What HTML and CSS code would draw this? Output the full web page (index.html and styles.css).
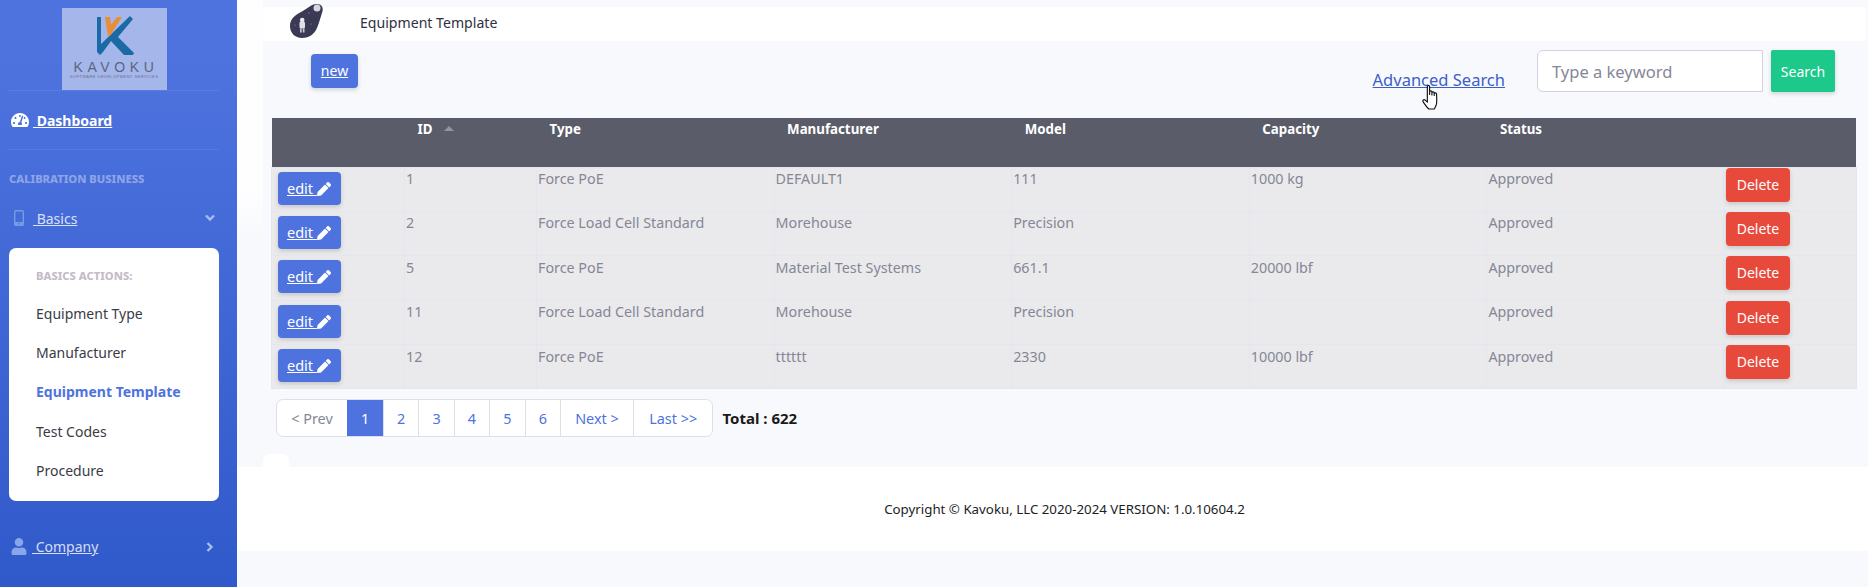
FILE: index.html
```html
<!DOCTYPE html>
<html lang="en">
<head>
<meta charset="utf-8">
<title>Equipment Template</title>
<link rel="stylesheet" href="styles.css">
</head>
<body>
<div class="app">
  <aside class="sidebar">
    <div class="brand">
      <div class="logo">
        <svg class="logo-mark" viewBox="0 0 38 40" width="38" height="40">
          <path fill="#1b6aa5" d="M0 1h4v27L33 0l3 3-15 18 16 16-1 2H27L14 25 6 36l-3 3-3-3z"/>
          <path fill="#e88e35" d="M8 1h5l1 8 6-8h5L13 20h-2z"/>
        </svg>
        <span class="logo-name">KAVOKU</span>
        <span class="logo-sub">SOFTWARE DEVELOPMENT SERVICES</span>
      </div>
    </div>
    <a class="nav-link nav-dash" href="#">
      <svg class="ic-dash" viewBox="0 0 576 512" width="18" height="16"><path fill="#fff" d="M288 32C128.94 32 0 160.94 0 320c0 52.8 14.25 102.26 39.06 144.8 5.61 9.62 16.3 15.2 27.44 15.2h443c11.14 0 21.83-5.58 27.44-15.2C561.75 422.26 576 372.8 576 320c0-159.06-128.94-288-288-288zm0 64c14.71 0 26.58 10.13 30.32 23.65-1.11 2.26-2.64 4.23-3.45 6.67l-9.22 27.67c-5.13 3.49-10.97 6.01-17.64 6.01-17.67 0-32-14.33-32-32S270.33 96 288 96zM96 384c-17.67 0-32-14.33-32-32s14.33-32 32-32 32 14.33 32 32-14.33 32-32 32zm48-160c-17.67 0-32-14.33-32-32s14.33-32 32-32 32 14.33 32 32-14.33 32-32 32zm246.77-72.41l-61.33 184C343.13 347.33 352 364.54 352 384c0 11.72-3.38 22.55-8.88 32H232.88c-5.5-9.45-8.88-20.28-8.88-32 0-33.94 26.5-61.43 59.9-63.59l61.34-184.01c4.17-12.56 17.73-19.45 30.36-15.17 12.57 4.19 19.35 17.79 15.17 30.36zm14.66 57.2l15.52-46.55c3.47-1.29 7.13-2.23 11.05-2.23 17.67 0 32 14.33 32 32s-14.33 32-32 32c-11.38-.01-20.89-6.28-26.57-15.22zM480 384c-17.67 0-32-14.33-32-32s14.33-32 32-32 32 14.33 32 32-14.33 32-32 32z"/></svg>
      <span class="u">&nbsp;Dashboard</span>
    </a>
    <div class="side-heading">CALIBRATION BUSINESS</div>
    <a class="nav-link nav-basics" href="#">
      <svg class="ic-mobile" viewBox="0 0 10 16" width="10" height="16"><path fill="none" stroke="#6f9fe3" stroke-width="1.4" d="M1.700.7h6.600a1 1 0 0 1 1 1v12.600a1 1 0 0 1-1 1H1.700a1 1 0 0 1-1-1V1.700a1 1 0 0 1 1-1z"/><path fill="#6f9fe3" d="M1 12h8v3.500H1z"/><circle cx="5" cy="13.700" r=".8" fill="#4a6fd8"/></svg>
      <span class="u">&nbsp;Basics</span>
      <svg class="chev" viewBox="0 0 10 8" width="10" height="8"><path fill="none" stroke="#a9bcee" stroke-width="2.400" d="M1 1.500l4 4 4-4"/></svg>
    </a>
    <div class="panel">
      <div class="panel-heading">BASICS ACTIONS:</div>
      <a class="panel-item" href="#">Equipment Type</a>
      <a class="panel-item" href="#">Manufacturer</a>
      <a class="panel-item active" href="#">Equipment Template</a>
      <a class="panel-item" href="#">Test Codes</a>
      <a class="panel-item" href="#">Procedure</a>
    </div>
    <a class="nav-link nav-company" href="#">
      <svg class="ic-user" viewBox="0 0 448 512" width="16" height="17"><path fill="#8aa6ea" d="M224 256c70.7 0 128-57.3 128-128S294.7 0 224 0 96 57.3 96 128s57.3 128 128 128zm89.6 32h-16.7c-22.2 10.2-46.9 16-72.9 16s-50.6-5.8-72.9-16h-16.700C60.2 288 0 348.2 0 422.4V464c0 26.5 21.500 48 48 48h352c26.500 0 48-21.500 48-48v-41.600c0-74.200-60.200-134.400-134.400-134.400z"/></svg>
      <span class="u">&nbsp;Company</span>
      <svg class="chev" viewBox="0 0 8 10" width="8" height="10"><path fill="none" stroke="#a9bcee" stroke-width="2.400" d="M1.500 1l4 4-4 4"/></svg>
    </a>
  </aside>

  <main class="main">
    <div class="page">
      <header class="titlebar">
        <svg class="blob" viewBox="0 0 36 35" width="36" height="35">
          <path fill="#3b3a55" d="M28 0c5 0 7 4 5 9-2 6-3 10-5 15-3 7-9 10-15 10C6 34 1 29 1 22 1 15 6 11 12 8c6-3 10-8 16-8z"/>
          <circle cx="28" cy="4" r="3.500" fill="#d6d6dc"/>
          <rect x="10.500" y="17.500" width="5.500" height="7" rx="1.500" fill="#dfe1ea"/>
          <circle cx="13.200" cy="16" r="2.300" fill="#e8e8ee"/>
          <rect x="11" y="24.500" width="1.700" height="4" fill="#c6c7d2"/>
          <rect x="13.800" y="24.500" width="1.700" height="4" fill="#c6c7d2"/>
          <circle cx="20" cy="9" r=".7" fill="#6b7bd0"/><circle cx="6" cy="21" r=".6" fill="#8a8aa8"/><circle cx="22" cy="20" r=".6" fill="#8a8aa8"/>
        </svg>
        <span class="title">Equipment Template</span>
      </header>

      <div class="toolbar">
        <a class="btn btn-new" href="#">new</a>
        <a class="adv" href="#">Advanced Search</a>
        <input class="search" type="text" placeholder="Type a keyword">
        <button class="btn-search" type="button">Search</button>
      </div>

      <table class="grid">
        <colgroup><col class="c-f"><col class="c-a"><col class="c-b"><col class="c-b"><col class="c-b"><col class="c-b"><col class="c-b"><col class="c-a"></colgroup>
        <thead>
          <tr><th></th><th>ID<i class="sort"></i></th><th>Type</th><th>Manufacturer</th><th>Model</th><th>Capacity</th><th>Status</th><th></th></tr>
        </thead>
        <tbody>
          <tr><td><a class="btn btn-edit" href="#">edit <svg class="pencil" viewBox="0 0 512 512" width="14" height="14"><path fill="#fff" d="M497.900 142.100l-46.100 46.100c-4.700 4.700-12.300 4.700-17 0l-111-111c-4.700-4.700-4.700-12.300 0-17l46.100-46.100c18.700-18.700 49.100-18.700 67.900 0l60.100 60.100c18.800 18.700 18.800 49.100 0 67.900zM284.200 99.800L21.600 362.400.4 483.900c-2.900 16.400 11.400 30.600 27.800 27.800l121.500-21.300 262.600-262.600c4.700-4.700 4.700-12.300 0-17l-111-111c-4.800-4.700-12.400-4.700-17.100 0z"/></svg></a></td><td>1</td><td>Force PoE</td><td>DEFAULT1</td><td>111</td><td>1000 kg</td><td>Approved</td><td><button class="btn-del" type="button">Delete</button></td></tr>
          <tr><td><a class="btn btn-edit" href="#">edit <svg class="pencil" viewBox="0 0 512 512" width="14" height="14"><path fill="#fff" d="M497.900 142.100l-46.100 46.100c-4.700 4.700-12.300 4.700-17 0l-111-111c-4.700-4.700-4.700-12.300 0-17l46.100-46.100c18.700-18.700 49.100-18.700 67.900 0l60.100 60.100c18.800 18.700 18.800 49.100 0 67.900zM284.200 99.800L21.600 362.400.4 483.900c-2.900 16.400 11.400 30.600 27.800 27.800l121.500-21.300 262.600-262.600c4.700-4.700 4.700-12.300 0-17l-111-111c-4.800-4.700-12.400-4.700-17.100 0z"/></svg></a></td><td>2</td><td>Force Load Cell Standard</td><td>Morehouse</td><td>Precision</td><td></td><td>Approved</td><td><button class="btn-del" type="button">Delete</button></td></tr>
          <tr><td><a class="btn btn-edit" href="#">edit <svg class="pencil" viewBox="0 0 512 512" width="14" height="14"><path fill="#fff" d="M497.900 142.100l-46.100 46.100c-4.700 4.700-12.300 4.700-17 0l-111-111c-4.700-4.700-4.700-12.300 0-17l46.100-46.100c18.700-18.700 49.100-18.700 67.900 0l60.100 60.100c18.800 18.700 18.800 49.100 0 67.900zM284.200 99.800L21.600 362.400.4 483.900c-2.900 16.400 11.400 30.600 27.800 27.800l121.500-21.300 262.600-262.600c4.700-4.700 4.700-12.300 0-17l-111-111c-4.800-4.700-12.400-4.700-17.100 0z"/></svg></a></td><td>5</td><td>Force PoE</td><td>Material Test Systems</td><td>661.1</td><td>20000 lbf</td><td>Approved</td><td><button class="btn-del" type="button">Delete</button></td></tr>
          <tr><td><a class="btn btn-edit" href="#">edit <svg class="pencil" viewBox="0 0 512 512" width="14" height="14"><path fill="#fff" d="M497.900 142.100l-46.100 46.100c-4.700 4.700-12.300 4.700-17 0l-111-111c-4.700-4.700-4.700-12.300 0-17l46.100-46.100c18.700-18.700 49.100-18.700 67.900 0l60.100 60.100c18.800 18.700 18.800 49.100 0 67.900zM284.200 99.800L21.600 362.400.4 483.900c-2.900 16.400 11.400 30.600 27.800 27.800l121.500-21.300 262.600-262.600c4.700-4.700 4.700-12.300 0-17l-111-111c-4.800-4.700-12.400-4.700-17.100 0z"/></svg></a></td><td>11</td><td>Force Load Cell Standard</td><td>Morehouse</td><td>Precision</td><td></td><td>Approved</td><td><button class="btn-del" type="button">Delete</button></td></tr>
          <tr><td><a class="btn btn-edit" href="#">edit <svg class="pencil" viewBox="0 0 512 512" width="14" height="14"><path fill="#fff" d="M497.900 142.100l-46.100 46.100c-4.700 4.700-12.300 4.700-17 0l-111-111c-4.700-4.700-4.700-12.300 0-17l46.100-46.100c18.700-18.700 49.100-18.700 67.900 0l60.100 60.100c18.800 18.700 18.800 49.100 0 67.900zM284.200 99.800L21.600 362.400.4 483.900c-2.900 16.400 11.400 30.600 27.800 27.800l121.500-21.300 262.600-262.600c4.700-4.700 4.700-12.300 0-17l-111-111c-4.800-4.700-12.400-4.700-17.100 0z"/></svg></a></td><td>12</td><td>Force PoE</td><td>tttttt</td><td>2330</td><td>10000 lbf</td><td>Approved</td><td><button class="btn-del" type="button">Delete</button></td></tr>
        </tbody>
      </table>

      <div class="pager-row">
        <nav class="pager">
          <a class="pg pg-prev" href="#">&lt; Prev</a>
          <a class="pg pg-cur" href="#">1</a>
          <a class="pg pg-n" href="#">2</a>
          <a class="pg pg-n" href="#">3</a>
          <a class="pg pg-n" href="#">4</a>
          <a class="pg pg-n" href="#">5</a>
          <a class="pg pg-n" href="#">6</a>
          <a class="pg pg-next" href="#">Next &gt;</a>
          <a class="pg pg-last" href="#">Last &gt;&gt;</a>
        </nav>
        <span class="total">Total : 622</span>
      </div>
      <div class="notch"></div>
    </div>
    <footer class="footer">Copyright © Kavoku, LLC 2020-2024 VERSION: 1.0.10604.2</footer>
  </main>
</div>
<svg class="cursor" viewBox="0 0 18 24" width="19" height="25">
  <path fill="#fff" stroke="#111" stroke-width="1.100" stroke-linejoin="round" d="M5 1.500c0-1.300 2.200-1.300 2.200 0V9V6.500c0-1.200 2.200-1.200 2.200 0V9.500V7.500c0-1.200 2.200-1.200 2.200 0V10V8.500c0-1.200 2.200-1.200 2.200 0 .4 4 .2 6.500.1 9-.3 2.600-1.400 4-2.200 5.500H6.500C4.500 21.500 3 19 1 16.200c-.9-1.400.7-2.800 1.900-1.700L5 16.500z"/>
</svg>
</body>
</html>
```
FILE: styles.css
```css
* { box-sizing: border-box; }
html, body { margin: 0; height: 100%; }
body {
  font-family: "Noto Sans", "Open Sans", Arial, sans-serif;
  font-size: 14px;
  color: #858796;
  background: #f8f9fc;
  overflow: hidden;
  position: relative;
}
a { color: inherit; }
.app { display: flex; height: 587px; }

/* Sidebar */
.sidebar {
  width: 237px;
  flex: none;
  height: 587px;
  background: linear-gradient(180deg, #4e73df 10%, #3059ca 100%);
  color: #fff;
  display: flex;
  flex-direction: column;
}
.brand { height: 91px; padding-top: 8px; margin: 0 18px 0 9px; border-bottom: 1px solid rgba(255,255,255,.08); display: flex; justify-content: center; }
.logo {
  width: 105px;
  height: 82px;
  background: #a5b7ea;
  display: flex;
  flex-direction: column;
  align-items: center;
  padding-top: 8px;
}
.logo-mark { display: block; flex: none; margin-left: 3px; }
.logo-name { font-size: 14px; letter-spacing: 4.600px; color: #5c6580; line-height: 14px; margin-top: 4px; padding-left: 4px; font-family: "Liberation Sans", Arial, sans-serif; }
.logo-sub { font-size: 4.200px; letter-spacing: .35px; color: #6a7390; line-height: 5px; white-space: nowrap; font-family: "Liberation Sans", Arial, sans-serif; }
.nav-link { display: flex; align-items: center; text-decoration: none; }
.u { text-decoration: underline; }
.nav-dash {
  height: 59px;
  margin: 0 18px 0 9px;
  padding: 0 0 0 2px;
  border-bottom: 1px solid rgba(255,255,255,.08);
  font-weight: 700;
  font-size: 14px;
  gap: 4px;
  color: #fff;
}
.side-heading { font-size: 11.200px; font-weight: 800; color: rgba(255,255,255,.4); margin: 22px 0 0 9px; line-height: 14px; }
.nav-basics, .nav-company { color: rgba(255,255,255,.8); font-size: 14px; padding: 0 18px 0 14px; gap: 9px; }
.nav-basics { height: 24px; margin-top: 20px; }
.nav-basics .chev, .nav-company .chev { margin-left: auto; }
.nav-basics .chev { margin-right: 4px; }
.nav-company { height: 24px; margin-top: 34px; padding-left: 11px; gap: 5px; }
.nav-company .chev { margin-right: 5px; }
.panel {
  width: 210px;
  height: 253px;
  margin: 17.500px 0 0 9px;
  background: #fff;
  border-radius: 7px;
  padding: 21px 0 0 27px;
}
.panel-heading { font-size: 11.200px; font-weight: 800; color: #c5bcc8; line-height: 14px; margin-bottom: 11.500px; }
.panel-item { display: block; height: 39.200px; line-height: 39.200px; font-size: 14px; color: #3a3b45; text-decoration: none; }
.panel-item.active { color: #4e73df; font-weight: 700; }

/* Main */
.main { flex: 1; min-width: 0; display: flex; flex-direction: column; }
.page {
  height: 467px;
  padding: 7px 2px 0 26px;
  display: flex;
  flex-direction: column;
  background: linear-gradient(180deg, #fefeff 0, #fefeff 190px, #f8f9fc 240px) left top / 26px 100% no-repeat;
}
.titlebar { height: 34px; background: #fff; display: flex; align-items: center; padding-left: 26px; flex: none; }
.blob { flex: none; margin-top: -6px; }
.title { margin: 0 0 3px 35px; color: #2f3040; font-size: 14.100px; }
.toolbar { height: 77px; flex: none; display: flex; align-items: flex-start; padding-right: 31px; }
.btn { display: inline-block; background: #4e73df; color: #fff; border-radius: 4px; box-shadow: 0 2px 4px rgba(58,59,69,.2); }
.btn-new { margin: 13px 0 0 48px; width: 47px; height: 34px; line-height: 34px; text-align: center; font-size: 14px; }
.adv { margin: 29px 32px 0 auto; color: #3b5fc8; font-size: 16.500px; line-height: 20px; }
.search {
  width: 226px;
  height: 42px;
  margin-top: 9px;
  border: 1px solid #d1d3e2;
  border-radius: 6px 0 0 6px;
  background: #fff;
  padding: 0 14px;
  font: inherit;
  font-size: 16.500px;
  outline: none;
}
.search::placeholder { color: #858796; opacity: 1; }
.btn-search {
  width: 64px;
  height: 42px;
  margin: 9px 0 0 8px;
  background: #1cc88a;
  color: #fff;
  border: 0;
  border-radius: 2px;
  font: inherit;
  font-size: 14px;
  box-shadow: 0 2px 4px rgba(58,59,69,.2);
}

/* Table */
.grid { width: 1585px; margin-left: 8px; table-layout: fixed; border-collapse: collapse; flex: none; }
.c-f { width: 133px; }
.c-a { width: 132px; }
.c-b { width: 237.600px; }
.grid th {
  height: 49px;
  background: #5a5c69;
  color: #fff;
  font-size: 13.300px;
  font-weight: 700;
  text-align: left;
  vertical-align: top;
  padding: 1.500px 0 0 13px;
  line-height: 18px;
}
.sort { display: inline-block; width: 0; height: 0; margin-left: 12px; vertical-align: 3px; border: 5px solid transparent; border-top: 0; border-bottom: 5px solid #9a919f; }
.grid td {
  height: 44.400px;
  background: #eaeaec;
  border: 1px solid #e3e6f0;
  vertical-align: top;
  padding: 1.500px 0 0 1px;
  line-height: 20px;
  font-size: 14.300px;
  white-space: nowrap;
}
.grid td:first-child { padding: 4px 0 0 6px; }
.grid td:last-child { padding: 0 0 0 1px; }
.btn-edit { width: 63px; height: 33px; line-height: 33px; font-size: 14.500px; padding-left: 9px; white-space: nowrap; }
.pencil { vertical-align: -2px; }
.btn-del {
  display: block;
  width: 64px;
  height: 34px;
  background: #e74a3b;
  color: #fff;
  border: 0;
  border-radius: 4px;
  font: inherit;
  font-size: 14px;
  padding: 0;
  box-shadow: 0 2px 4px rgba(58,59,69,.2);
}

/* Pager */
.pager-row { display: flex; align-items: center; margin: 10px 0 0 13px; flex: none; }
.pager { display: flex; height: 38px; background: #fff; border: 1px solid #dddfeb; border-radius: 7px; overflow: hidden; }
.pg { display: flex; align-items: center; justify-content: center; font-size: 14.400px; color: #4e73df; text-decoration: none; border-left: 1px solid #dddfeb; }
.pg-prev { width: 70px; border-left: 0; color: #858796; }
.pg-cur { width: 36px; background: #4e73df; color: #fff; border-left: 0; }
.pg-n { width: 35.400px; }
.pg-next { width: 73px; }
.pg-last { width: 79.500px; }
.total { margin-left: 9px; font-weight: 700; color: #1a1a1a; font-size: 15px; }
.notch { margin-top: auto; width: 26px; height: 13px; background: #fff; border-radius: 7px 7px 0 0; flex: none; }

/* Footer */
.footer { height: 84px; background: #fff; flex: none; text-align: center; padding: 32px 0 0 24px; font-size: 13.300px; line-height: 20px; color: #1d1d26; }
.cursor { position: absolute; left: 1422px; top: 85px; }
```
